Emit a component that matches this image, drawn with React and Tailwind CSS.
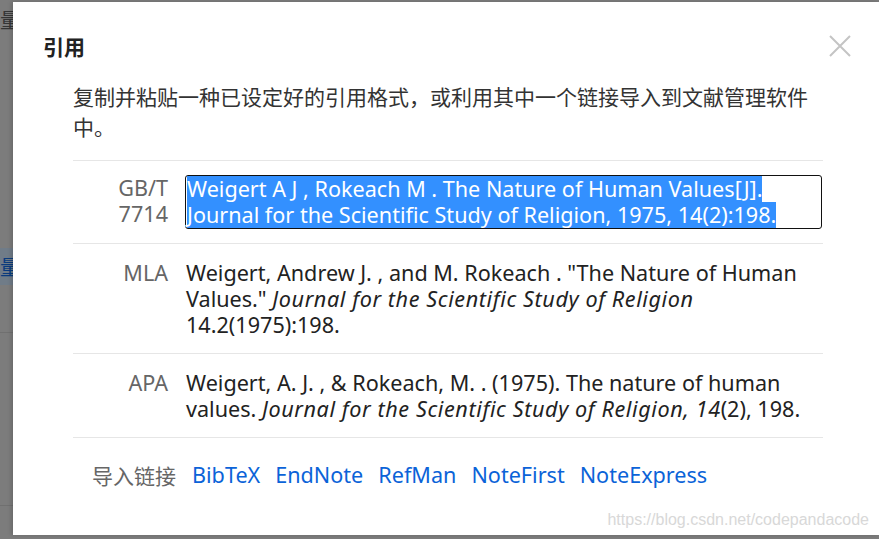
export default function App() {
  const lbl = "w-[95px] shrink-0 text-right text-[#666] leading-[26px]";
  return (
    <div className="w-[879px] h-[539px] bg-[#7c7c7c] flex overflow-hidden font-['Noto_Sans','Noto_Sans_CJK_SC',sans-serif] text-[21.6px]">
      {/* page behind the overlay */}
      <div className="w-[13px] shrink-0 flex flex-col overflow-hidden whitespace-nowrap">
        <div className="h-[8px]" />
        <div className="text-[20px] leading-[24px] text-[#353535] font-['Noto_Sans_CJK_SC',sans-serif]">量</div>
        <div className="h-[216px]" />
        <div className="h-[37px] bg-[#707c88] flex items-center text-[20px] text-[#0a3b7e] font-['Noto_Sans_CJK_SC',sans-serif]">量</div>
        <div className="h-[47px]" />
        <div className="h-px bg-[#707070]" />
        <div className="h-[172px]" />
        <div className="h-px bg-[#707070]" />
      </div>

      {/* modal */}
      <div className="relative flex-1 mt-[2px] mb-[4px] bg-white shadow-[-2px_0_4px_rgba(0,0,0,0.15)] flex flex-col">
        <div className="flex items-center justify-between pl-[30px] pr-[28px] pt-[31px]">
          <div className="text-[21px] font-bold leading-[26px] text-[#222] font-['Noto_Sans_CJK_SC',sans-serif]">引用</div>
          <svg width="22" height="22" viewBox="0 0 22 22">
            <path d="M1 1 L21 21 M21 1 L1 21" stroke="#c4c4c4" strokeWidth="2" />
          </svg>
        </div>

        <div className="ml-[60px] w-[750px] flex flex-col">
          <div className="mt-[22px] text-[21px] leading-[30px] text-[#333] font-['Noto_Sans_CJK_SC',sans-serif] pb-[19px]">
            复制并粘贴一种已设定好的引用格式，或利用其中一个链接导入到文献管理软件中。
          </div>

          <div className="border-t border-[#e6e6e6] flex gap-[17px] pt-[14px] pb-[14px]">
            <div className={lbl}>
              <div>GB/T</div>
              <div>7714</div>
            </div>
            <div className="w-[637px] border-[1.5px] border-[#111] rounded-[3px] px-px whitespace-nowrap text-white leading-[26px]">
              <div className="w-fit bg-[#3390ff]">Weigert A J , Rokeach M . The Nature of Human Values[J]. </div>
              <div className="w-fit bg-[#3390ff]">Journal for the Scientific Study of Religion, 1975, 14(2):198.</div>
            </div>
          </div>

          <div className="border-t border-[#e6e6e6] flex gap-[18px] pt-[16px] pb-[15px]">
            <div className={lbl}>MLA</div>
            <div className="whitespace-nowrap text-[#222] leading-[26px]">
              <div>Weigert, Andrew J. , and M. Rokeach . "The Nature of Human</div>
              <div>Values." <i className="tracking-[0.6px]">Journal for the Scientific Study of Religion</i></div>
              <div>14.2(1975):198.</div>
            </div>
          </div>

          <div className="border-t border-[#e6e6e6] flex gap-[18px] pt-[16px] pb-[15px]">
            <div className={lbl}>APA</div>
            <div className="whitespace-nowrap text-[#222] leading-[26px]">
              <div>Weigert, A. J. , &amp; Rokeach, M. . (1975). The nature of human</div>
              <div>values. <i className="tracking-[0.6px]">Journal for the Scientific Study of Religion, 14</i>(2), 198.</div>
            </div>
          </div>

          <div className="border-t border-[#e6e6e6] flex items-center gap-[15px] pl-[19px] pt-[24px] leading-[26px] whitespace-nowrap">
            <span className="text-[#666] text-[21px] mr-[1px] font-['Noto_Sans_CJK_SC',sans-serif]">导入链接</span>
            <a className="text-[#0b63d8]">BibTeX</a>
            <a className="text-[#0b63d8]">EndNote</a>
            <a className="text-[#0b63d8]">RefMan</a>
            <a className="text-[#0b63d8]">NoteFirst</a>
            <a className="text-[#0b63d8]">NoteExpress</a>
          </div>
        </div>

        <div className="absolute right-[10px] bottom-[5px] text-[16px] leading-[20px] text-[#d8d8d8] font-['Liberation_Sans',sans-serif]">
          https://blog.csdn.net/codepandacode
        </div>
      </div>
    </div>
  );
}
